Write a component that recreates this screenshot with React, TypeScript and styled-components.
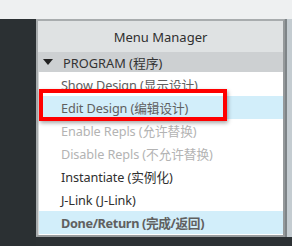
import React from 'react'
import styled, { createGlobalStyle } from 'styled-components'

const GlobalStyle = createGlobalStyle`
  html, body {
    margin: 0;
    padding: 0;
    background: #2c3134;
    font-family: "Noto Sans", "Noto Sans CJK SC", sans-serif;
  }
`

const Screen = styled.div`
  width: 292px;
  height: 246px;
  overflow: hidden;
  display: flex;
  flex-direction: column;
  background: #2c3134;
`

const TopBar = styled.div`
  height: 19px;
  flex: none;
  background: #eef0f1;
`

const Body = styled.div`
  display: flex;
  flex: 1;
`

const LeftPanel = styled.div`
  width: 36px;
  flex: none;
  background: #2b3033;
`

const SideStrip = styled.div`
  width: 7px;
  flex: none;
  margin-left: auto;
  height: 218px;
  background: linear-gradient(90deg, #7e8487 0 2px, #c4ccd1 2px);
`

const Frame = styled.div`
  position: relative;
  width: 245px;
  height: 214px;
  border: 2px solid #a8acae;
  border-right-color: #95999b;
  border-bottom-color: #999d9f;
  background: #ffffff;
  display: flex;
  flex-direction: column;
`

const Header = styled.div`
  height: 31px;
  flex: none;
  display: flex;
  align-items: center;
  justify-content: center;
  background: #dfe2e3;
  color: #2f2f2f;
  font-size: 13px;
`

const GroupRow = styled.div`
  height: 20px;
  flex: none;
  display: flex;
  align-items: center;
  gap: 10px;
  padding-left: 5px;
  background: #cdd0d2;
  color: #333;
  font-size: 12.8px;
`

const Caret = styled.svg`
  width: 10px;
  height: 6px;
  flex: none;
`

const ItemList = styled.div`
  flex: 1;
  display: flex;
  flex-direction: column;
  padding: 1px 0 0;
  border-left: 1px solid #d6d8d9;
`

const Item = styled.div<{ $active?: boolean; $disabled?: boolean; $bold?: boolean; $dark?: boolean }>`
  height: 23px;
  display: flex;
  align-items: center;
  padding-left: 22px;
  font-size: 12.7px;
  font-weight: ${p => (p.$bold ? 700 : 400)};
  letter-spacing: ${p => (p.$bold ? '-0.35px' : '-0.1px')};
  background: ${p => (p.$active ? '#d2eefa' : 'transparent')};
  color: ${p => (p.$disabled ? '#b3b3b3' : p.$dark ? '#303030' : '#606060')};
`

const Callout = styled.div`
  position: absolute;
  left: 1px;
  top: 68px;
  width: 188px;
  height: 32px;
  box-sizing: border-box;
  border: 4px solid #ff0000;
  box-shadow: 1px 2px 4px rgba(0, 0, 0, 0.35);
  pointer-events: none;
`

const items = [
  { label: 'Show Design (显示设计)' },
  { label: 'Edit Design (编辑设计)', active: true },
  { label: 'Enable Repls (允许替换)', disabled: true },
  { label: 'Disable Repls (不允许替换)', disabled: true },
  { label: 'Instantiate (实例化)', dark: true },
  { label: 'J-Link (J-Link)', dark: true },
  { label: 'Done/Return (完成/返回)', active: true, bold: true }
]

const App: React.FC = () => (
  <Screen>
    <GlobalStyle />
    <TopBar />
    <Body>
      <LeftPanel />
      <Frame>
        <Header>Menu Manager</Header>
        <GroupRow>
          <Caret viewBox="0 0 10 6">
            <path d="M0 0 H10 L5 6 Z" fill="#222" />
          </Caret>
          PROGRAM (程序)
        </GroupRow>
        <ItemList>
          {items.map(it => (
            <Item key={it.label} $active={it.active} $disabled={it.disabled} $bold={it.bold} $dark={it.dark}>
              {it.label}
            </Item>
          ))}
        </ItemList>
        <Callout />
      </Frame>
      <SideStrip />
    </Body>
  </Screen>
)

export default App
